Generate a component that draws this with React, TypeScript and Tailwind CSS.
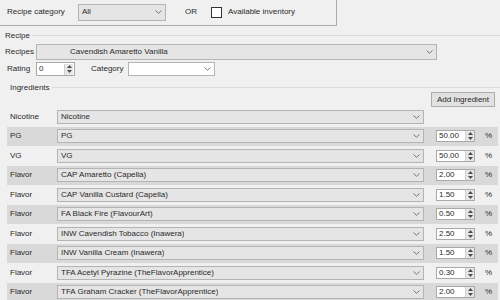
import React from "react";

type Ingredient = {
  kind: string;
  name: string;
  amount?: string;
};

const ingredients: Ingredient[] = [
  { kind: "Nicotine", name: "Nicotine" },
  { kind: "PG", name: "PG", amount: "50.00" },
  { kind: "VG", name: "VG", amount: "50.00" },
  { kind: "Flavor", name: "CAP Amaretto (Capella)", amount: "2.00" },
  { kind: "Flavor", name: "CAP Vanilla Custard (Capella)", amount: "1.50" },
  { kind: "Flavor", name: "FA Black Fire (FlavourArt)", amount: "0.50" },
  { kind: "Flavor", name: "INW Cavendish Tobacco (Inawera)", amount: "2.50" },
  { kind: "Flavor", name: "INW Vanilla Cream (Inawera)", amount: "1.50" },
  { kind: "Flavor", name: "TFA Acetyl Pyrazine (TheFlavorApprentice)", amount: "0.30" },
  { kind: "Flavor", name: "TFA Graham Cracker (TheFlavorApprentice)", amount: "2.00" },
];

function Chevron() {
  return (
    <svg width="7" height="4" viewBox="0 0 7 4" className="shrink-0">
      <path d="M0.5 0.5 L3.5 3.3 L6.5 0.5" fill="none" stroke="#6a6a6a" strokeWidth="0.9" />
    </svg>
  );
}

function Spinner() {
  return (
    <div className="flex h-full w-[9px] flex-col items-center justify-center gap-[2px] border-l border-[#d0d0d0] bg-[#e6e6e6]">
      <svg width="5" height="3" viewBox="0 0 5 3">
        <path d="M0 3 L2.5 0 L5 3 Z" fill="#4a4a4a" />
      </svg>
      <svg width="5" height="3" viewBox="0 0 5 3">
        <path d="M0 0 L2.5 3 L5 0 Z" fill="#4a4a4a" />
      </svg>
    </div>
  );
}

function Combo({
  text,
  className,
  white,
}: {
  text: string;
  className: string;
  white?: boolean;
}) {
  return (
    <div
      className={`flex items-center justify-between border border-[#b4b4b4] pr-[3px] ${
        white ? "bg-white" : "bg-[#e5e5e5]"
      } ${className}`}
    >
      <span className="truncate">{text}</span>
      <Chevron />
    </div>
  );
}

function GroupHeader({ label, className }: { label: string; className: string }) {
  return (
    <div className={`flex items-center ${className}`}>
      <span className="shrink-0 pr-[2px]">{label}</span>
      <div className="h-[2px] flex-1 border-t border-[#dcdcdc] border-b-white" />
    </div>
  );
}

export default function App() {
  return (
    <div
      className="relative h-[300px] w-[500px] overflow-hidden bg-[#f0f0f0] text-[8px] leading-[10px] text-[#2a2a2a]"
      style={{ fontFamily: '"Liberation Sans", Arial, sans-serif' }}
    >
      {/* filter group */}
      <div className="flex h-[26px] w-[337px] items-center border-r border-b border-[#adadad] pb-[1px]">
        <span className="w-[78px] pl-[7px]">Recipe category</span>
        <Combo text="All" className="h-[17px] w-[88px] pl-[3px]" />
        <span className="ml-[19px]">OR</span>
        <div className="ml-[14px] h-[11px] w-[11px] border border-[#333] bg-white" />
        <span className="ml-[6px]">Available inventory</span>
      </div>

      {/* recipe group */}
      <GroupHeader label="Recipe" className="h-[18px] pl-[5px] pt-[1px]" />

      <div className="flex h-[16px] items-center">
        <span className="w-[36px] pl-[5px]">Recipes</span>
        <Combo text="Cavendish Amaretto Vanilla" className="h-[16px] w-[401px] pl-[33px]" />
      </div>

      <div className="mt-[2px] flex h-[14px] items-center">
        <span className="w-[36px] pl-[7px]">Rating</span>
        <div className="flex h-[14px] w-[39px] items-center justify-between border border-[#a9a9a9] bg-white pl-[2px] pr-[1px]">
          <span>0</span>
          <div className="h-[11px]">
            <Spinner />
          </div>
        </div>
        <span className="ml-[16px] w-[37px]">Category</span>
        <Combo text="" className="h-[14px] w-[87px] bg-white" white />
      </div>

      {/* ingredients group */}
      <GroupHeader label="Ingredients" className="h-[16px] pl-[10px] pt-[8px]" />

      <div className="flex h-[15px] justify-end pr-[5px]">
        <button className="h-[15px] w-[64px] border border-[#adadad] bg-[#e1e1e1] text-[8px] leading-[10px]">
          Add Ingredient
        </button>
      </div>

      <div className="ml-[7px] mr-[2px] flex flex-col">
        {ingredients.map((ing, i) => (
          <div
            key={i}
            className={`flex h-[19.5px] items-center ${i % 2 === 1 ? "bg-[#d9d9d9]" : ""}`}
          >
            <span className="w-[50px] pl-[3px]">{ing.kind}</span>
            <Combo text={ing.name} className="h-[14px] w-[367px] pl-[3px]" />
            {ing.amount && (
              <>
                <div className="ml-[12px] flex h-[12px] w-[39px] items-center justify-between border border-[#a9a9a9] bg-white pl-[2px]">
                  <span>{ing.amount}</span>
                  <div className="h-[10px]">
                    <Spinner />
                  </div>
                </div>
                <span className="ml-[10px]">%</span>
              </>
            )}
          </div>
        ))}
      </div>
    </div>
  );
}
